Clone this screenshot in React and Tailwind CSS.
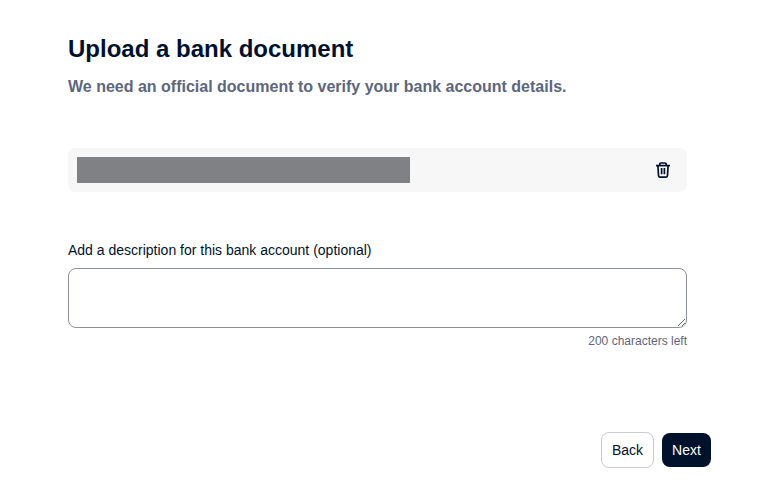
import React, { useState } from 'react';

const MAX_LENGTH = 200;

const TrashIcon = () => (
  <svg width="16" height="16" viewBox="0 0 16 16" fill="none" stroke="currentColor" strokeWidth="1.7">
    <path d="M1 3.6h14" />
    <path d="M4.75 3.5V2.25Q4.75 1 6 1h4q1.25 0 1.25 1.25V3.5" />
    <path d="M2.9 3.75l.6 9.8q.1 1.5 1.4 1.5h6.2q1.3 0 1.4-1.5l.6-9.8" />
    <path d="M6.6 6v6.3M9.4 6v6.3" />
  </svg>
);

const App = () => {
  const [description, setDescription] = useState('');
  const [hasFile, setHasFile] = useState(true);

  return (
    <div className="flex h-[499px] w-[763px] flex-col bg-white px-[68px] pt-[34px] font-['Liberation_Sans',Arial,sans-serif] text-[#00112c]">
      <h1 className="text-2xl leading-[30px] font-bold">Upload a bank document</h1>
      <p className="mt-[13px] h-5 text-base leading-5 font-bold text-[#5c667e]">
        We need an official document to verify your bank account details.
      </p>

      <div className="mt-[51px] h-11 w-[619px]">
        {hasFile && (
          <div className="flex h-full items-center justify-between rounded-lg bg-[#f7f7f7] pr-4 pl-[9px]">
            <div className="h-[26px] w-[333px] bg-[#808184]" />
            <button type="button" aria-label="Remove document" onClick={() => setHasFile(false)}>
              <TrashIcon />
            </button>
          </div>
        )}
      </div>

      <label htmlFor="description" className="mt-12 text-sm leading-5">
        Add a description for this bank account (optional)
      </label>
      <textarea
        id="description"
        value={description}
        maxLength={MAX_LENGTH}
        onChange={(e) => setDescription(e.target.value)}
        className="mt-2 h-[60px] w-[619px] shrink-0 rounded-lg border border-[#8c90a2] p-2 text-sm"
      />
      <div className="mt-[5px] w-[619px] text-right text-xs leading-4 text-[#5c667e]">
        {MAX_LENGTH - description.length} characters left
      </div>

      <div className="mt-[83px] flex w-[643px] items-center justify-end gap-2 text-sm">
        <button type="button" className="h-9 w-[53px] rounded-lg border border-[#cacbd3]">
          Back
        </button>
        <button type="button" className="h-[34px] w-[49px] rounded-lg bg-[#00112c] text-white">
          Next
        </button>
      </div>
    </div>
  );
};

export default App;
